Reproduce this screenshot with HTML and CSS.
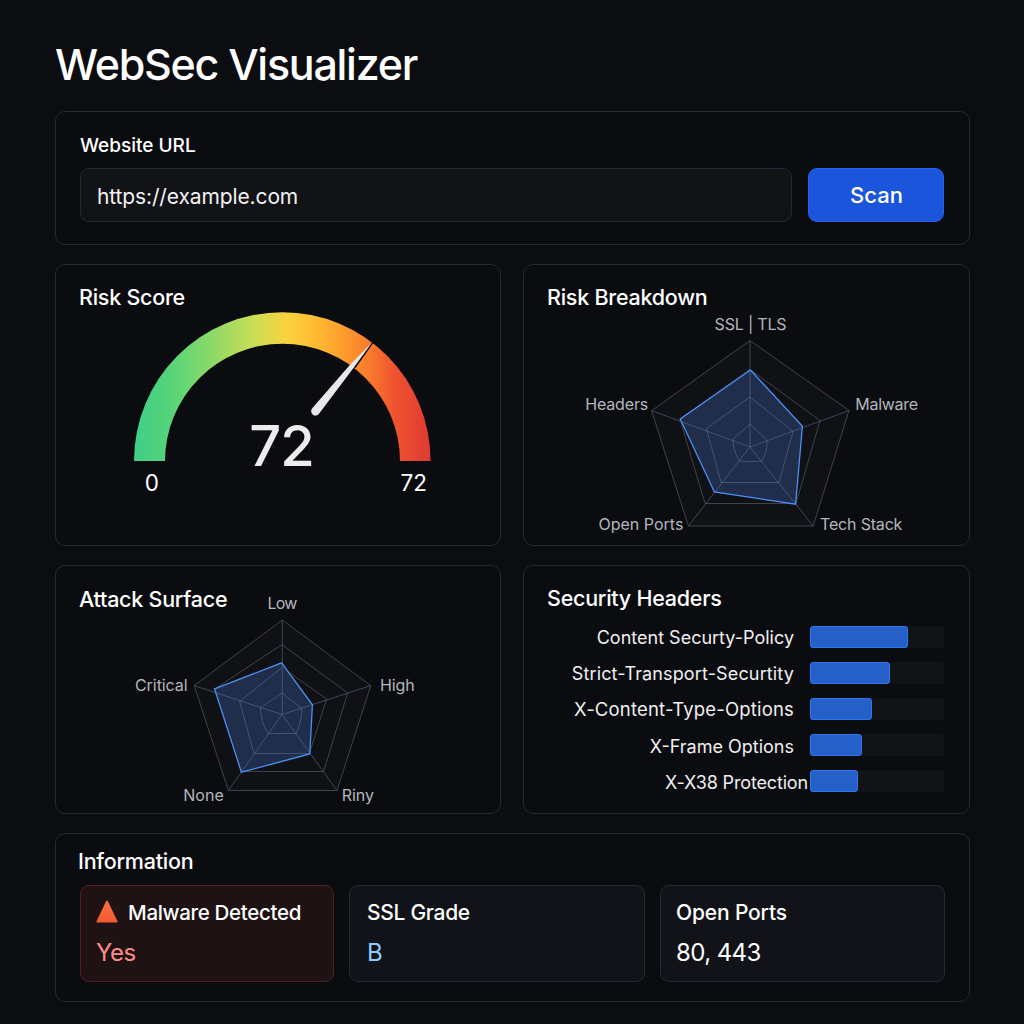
FILE: index.html
```html
<!DOCTYPE html>
<html lang="en">
<head>
<meta charset="utf-8">
<title>WebSec Visualizer</title>
<link rel="stylesheet" href="styles.css">
</head>
<body>
<main class="page">
  <h1 class="page-title">WebSec Visualizer</h1>

  <section class="card search">
    <label class="search-label" for="url">Website URL</label>
    <div class="search-row">
      <input class="search-input" id="url" type="text" value="https://example.com">
      <button class="search-button" type="button">Scan</button>
    </div>
  </section>

  <div class="charts">
    <section class="card chart-card">
      <h2 class="card-title">Risk Score</h2>
      <svg class="chart" viewBox="56 265 444 280">
        <defs>
          <linearGradient id="scale" gradientUnits="userSpaceOnUse" x1="134" y1="0" x2="431" y2="0">
            <stop offset="0" stop-color="#3fcf88"/>
            <stop offset="0.12" stop-color="#55d379"/>
            <stop offset="0.25" stop-color="#86d969"/>
            <stop offset="0.4" stop-color="#c9de57"/>
            <stop offset="0.52" stop-color="#fbd23d"/>
            <stop offset="0.65" stop-color="#ffb02f"/>
            <stop offset="0.78" stop-color="#fb7f2b"/>
            <stop offset="0.88" stop-color="#ee5230"/>
            <stop offset="1" stop-color="#df3a32"/>
          </linearGradient>
        </defs>
        <path fill="url(#scale)" d="M134 461A148.3 148.8 0 0 1 430.6 461H400A117.5 117.2 0 0 0 165 461Z"/>
        <path fill="#0c0d10" d="M372.4 342L373.2 343L355.6 368L352 367Z"/>
        <path fill="#e8e8e8" d="M372 342.5L354.2 367L319 413.8A4.2 4.2 0 0 1 312 408.6L349.8 365Z"/>
        <text class="gauge-value" x="281.4" y="466" text-anchor="middle">72</text>
        <text class="gauge-end" x="151.8" y="491" text-anchor="middle">0</text>
        <text class="gauge-end" x="413.8" y="491" text-anchor="middle">72</text>
      </svg>
    </section>

    <section class="card chart-card">
      <h2 class="card-title">Risk Breakdown</h2>
      <svg class="chart" viewBox="524 265 445 280">
        <polygon class="web web-fill" points="750,340.5 849,410.5 813.2,526 688.4,526 651.6,410.7"/>
        <polygon class="web" points="750,369.5 820,420.5 796,503.5 705,503.5 680,419"/>
        <polygon class="area" points="750.4,370 802.4,426.3 795.6,504.2 714.4,492 680.2,419"/>
        <polygon class="web web-over" points="750,397 793,431.5 779,482.5 721,482.5 706.5,428.5"/>
        <path class="web web-over" d="M750 424L767 440Q767.5 453 761.5 461Q750 462.5 739.5 461Q733 451 733 439Z"/>
        <path class="web web-over" d="M750 340.5V447M849 410.5L750 447M813.2 526L750 447M688.4 526L750 447M651.6 410.7L750 447"/>
        <polygon class="area-line" points="750.4,370 802.4,426.3 795.6,504.2 714.4,492 680.2,419"/>
        <text class="axis" x="714.6" y="330.4" textLength="72">SSL | TLS</text>
        <text class="axis" x="585.2" y="410.4" textLength="63">Headers</text>
        <text class="axis" x="855.2" y="410.4" textLength="63">Malware</text>
        <text class="axis" x="598.4" y="530.4" textLength="85">Open Ports</text>
        <text class="axis" x="820" y="530.4" textLength="82.4">Tech Stack</text>
      </svg>
    </section>

    <section class="card chart-card">
      <h2 class="card-title attack">Attack Surface</h2>
      <svg class="chart" viewBox="56 566 444 247">
        <polygon class="web web-fill" points="282.3,620 370.8,685.6 337,790.5 228.4,790.5 194.2,685.6"/>
        <polygon class="web" points="282,644.5 347.6,693 323.6,771.5 242,771.5 214.5,689"/>
        <polygon class="web" points="282,667.5 326.6,699 309.4,753.5 254,753.5 239.6,701.3"/>
        <polygon class="area" points="281.6,662.8 312.4,704.8 309.8,754 241.4,772.2 214.6,689"/>
        <path class="web web-over" d="M309.4 753.5H254L239.6 701.3L282 667.5"/>
        <path class="web web-over" d="M282 693L301.6 708.5Q302 722 296 733.5H268Q261 723 260.4 708Z"/>
        <path class="web web-over" d="M282.3 620V714.5M370.8 685.6L282 714.5M337 790.5L282 714.5M228.4 790.5L282 714.5M194.2 685.6L282 714.5"/>
        <polygon class="area-line" points="281.6,662.8 312.4,704.8 309.8,754 241.4,772.2 214.6,689"/>
        <text class="axis" x="267.4" y="609" textLength="30">Low</text>
        <text class="axis" x="135" y="691.4" textLength="52.6">Critical</text>
        <text class="axis" x="380" y="691.4" textLength="34.6">High</text>
        <text class="axis" x="183.2" y="801.4" textLength="40.6">None</text>
        <text class="axis" x="341.8" y="801.4" textLength="32.2">Riny</text>
      </svg>
    </section>

    <section class="card chart-card">
      <h2 class="card-title">Security Headers</h2>
      <ul class="bars">
        <li class="bar-row"><span class="bar-label">Content Securty-Policy</span><span class="track"><span class="bar" style="width:98px"></span></span></li>
        <li class="bar-row"><span class="bar-label transport">Strict-Transport-Securtity</span><span class="track"><span class="bar" style="width:79.5px"></span></span></li>
        <li class="bar-row"><span class="bar-label content-type">X-Content-Type-Options</span><span class="track"><span class="bar" style="width:61.5px"></span></span></li>
        <li class="bar-row"><span class="bar-label">X-Frame Options</span><span class="track"><span class="bar" style="width:52px"></span></span></li>
        <li class="bar-row tight"><span class="bar-label protection">X-X38 Protection</span><span class="track"><span class="bar" style="width:48px"></span></span></li>
      </ul>
    </section>
  </div>

  <section class="card info">
    <h2 class="info-title">Information</h2>
    <div class="tiles">
      <div class="tile danger">
        <h3 class="tile-title">
          <svg class="warning" viewBox="0 0 22 23">
            <defs><linearGradient id="warn" x1="0" y1="0" x2="0" y2="1"><stop offset="0" stop-color="#fb7040"/><stop offset="1" stop-color="#f25a2e"/></linearGradient></defs>
            <path fill="url(#warn)" d="M11 0.6Q11.7 0.6 12 1.4L21.6 21.6Q21.8 22.4 21 22.4H1Q0.2 22.4 0.4 21.6L10 1.4Q10.3 0.6 11 0.6Z"/>
          </svg>
          Malware Detected
        </h3>
        <p class="tile-value">Yes</p>
      </div>
      <div class="tile grade">
        <h3 class="tile-title">SSL Grade</h3>
        <p class="tile-value">B</p>
      </div>
      <div class="tile ports">
        <h3 class="tile-title">Open Ports</h3>
        <p class="tile-value">80, 443</p>
      </div>
    </div>
  </section>
</main>
</body>
</html>
```
FILE: styles.css
```css
* {
  box-sizing: border-box;
  margin: 0;
  padding: 0;
}

body {
  background: #0c0d10;
  color: #fff;
  font-family: Inter, "Liberation Sans", sans-serif;
}

.page {
  width: 1024px;
  height: 1024px;
  padding: 37px 54px 0 55px;
}

.page-title {
  height: 74px;
  line-height: 54px;
  font-size: 43px;
  font-weight: 500;
  letter-spacing: -1.28px;
}

.card {
  background: #0b0c0f;
  border: 1px solid #252934;
  border-radius: 10px;
}

.search {
  height: 134px;
  padding: 21px 25px 0 24px;
}

.search-label {
  display: block;
  margin-bottom: 10px;
  font-size: 19px;
  font-weight: 500;
  line-height: 25px;
}

.search-row {
  display: flex;
  gap: 16px;
}

.search-input {
  flex: 1;
  min-width: 0;
  height: 54px;
  padding: 2px 16px 0;
  background: #111317;
  border: 1px solid #222836;
  border-radius: 9px;
  color: #f2f2f3;
  font: 400 21px Inter, "Liberation Sans", sans-serif;
  letter-spacing: -0.12px;
}

.search-button {
  width: 136px;
  height: 54px;
  padding-left: 1px;
  background: #1a55dc;
  border: 1px solid #2463ec;
  border-radius: 9px;
  color: #fff;
  font: 500 22px Inter, "Liberation Sans", sans-serif;
}

.charts {
  display: grid;
  grid-template-columns: 446px 447px;
  grid-template-rows: 282px 249px;
  gap: 19px 22px;
  margin: 19px 0;
}

.chart-card {
  display: grid;
}

.card-title {
  grid-area: 1 / 1;
  padding: 19px 23px 0;
  font-size: 21.5px;
  font-weight: 500;
  line-height: 26px;
  letter-spacing: -0.25px;
}

.attack {
  padding-top: 20px;
}

.chart {
  grid-area: 1 / 1;
  width: 100%;
  height: 100%;
}

.gauge-value {
  fill: #ececec;
  font-size: 56px;
  font-weight: 500;
  letter-spacing: -1px;
}

.gauge-end {
  fill: #fff;
  font-size: 22.5px;
}

.web {
  fill: none;
  stroke: #41424c;
  stroke-width: 1;
}

.web-fill {
  fill: #101114;
}

.web-over {
  stroke: #5f719e;
  stroke-opacity: 0.55;
}

.area {
  fill: #202e4c;
}

.area-line {
  fill: none;
  stroke: #4a90f5;
  stroke-width: 1.3;
}

.axis {
  fill: #b3b6bd;
  font-size: 16px;
}

.bars {
  grid-area: 1 / 1;
  padding: 52.6px 25px 0 0;
  list-style: none;
}

.bar-row {
  display: flex;
  align-items: center;
  justify-content: flex-end;
  gap: 16px;
  height: 36.2px;
}

.bar-label {
  padding-top: 3px;
  color: #f0f0f1;
  font-size: 18px;
  line-height: 24px;
  white-space: nowrap;
}

.transport {
  letter-spacing: 0.14px;
}

.content-type {
  padding-top: 0;
  font-size: 18.5px;
  letter-spacing: 0.18px;
}

.protection {
  letter-spacing: -0.15px;
}

.tight {
  gap: 2px;
}

.track {
  width: 134px;
  height: 22px;
  background: #121317;
  border-radius: 3px;
}

.bar {
  display: block;
  height: 22px;
  background: #2560c8;
  border: 1px solid #2f77ee;
  border-radius: 3px;
}

.info {
  height: 169px;
  padding: 14px 24px 0;
}

.info-title {
  margin: 0 0 11px -2px;
  font-size: 21.5px;
  font-weight: 500;
  line-height: 26px;
  letter-spacing: -0.22px;
}

.tiles {
  display: grid;
  grid-template-columns: 254px 296px 285px;
  gap: 15px;
}

.tile {
  height: 97px;
  padding: 13px 17px 0;
  background: #111318;
  border: 1px solid #252a37;
  border-radius: 9px;
}

.tile-title {
  display: flex;
  align-items: center;
  gap: 10px;
  font-size: 20.5px;
  font-weight: 500;
  line-height: 28px;
  letter-spacing: -0.32px;
}

.grade .tile-title,
.ports .tile-title {
  font-size: 21px;
  letter-spacing: -0.15px;
}

.grade .tile-title {
  letter-spacing: -0.3px;
}

.tile-value {
  margin-top: 12px;
  font-size: 24px;
  line-height: 28px;
}

.danger {
  padding-left: 15px;
  background: #1e1214;
  border-color: #571d1f;
}

.danger .tile-value {
  color: #fb8d85;
  letter-spacing: -0.5px;
}

.grade .tile-value {
  color: #8fcbfa;
}

.ports {
  padding-left: 15px;
}

.ports .tile-value {
  letter-spacing: -0.6px;
}

.warning {
  width: 22px;
  height: 23px;
  margin-top: -4px;
}
```
